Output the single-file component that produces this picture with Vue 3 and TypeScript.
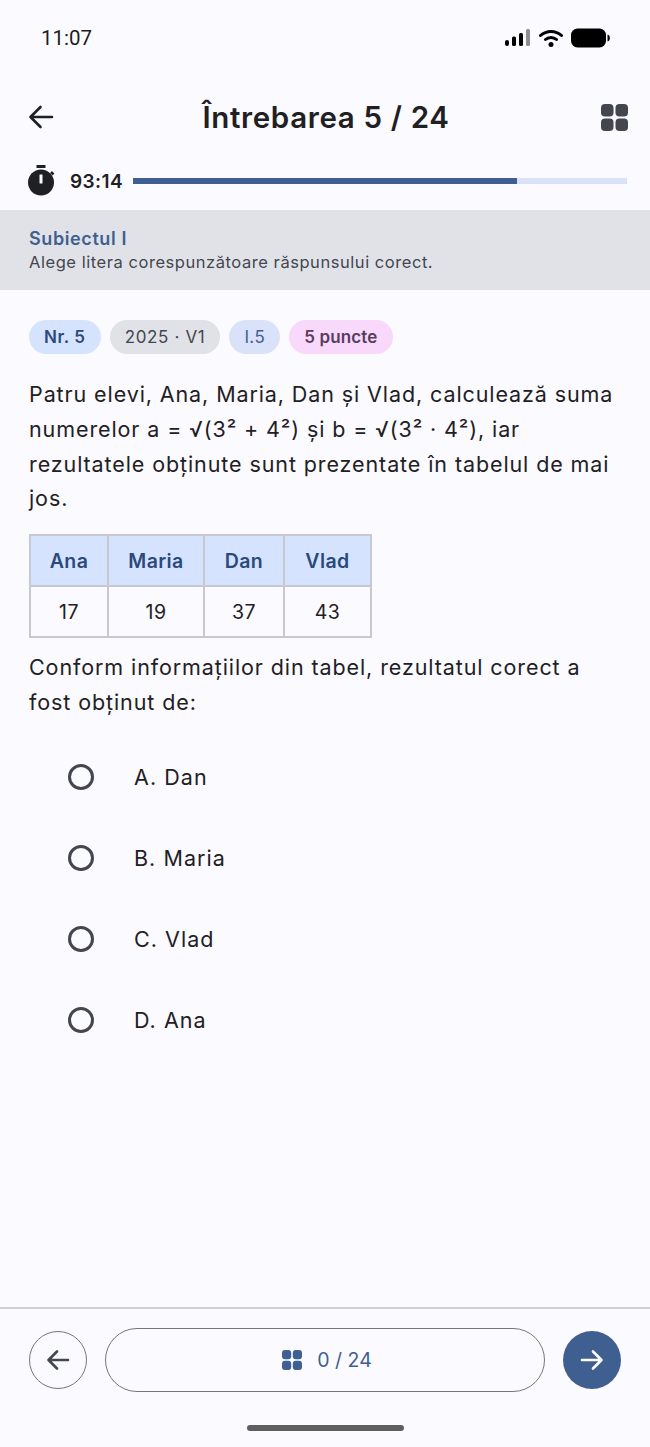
<script setup lang="ts">
const chips = [
  { t: 'Nr. 5', c: 'c1' },
  { t: '2025 · V1', c: 'c2' },
  { t: 'I.5', c: 'c3' },
  { t: '5 puncte', c: 'c4' },
]
const heads = ['Ana', 'Maria', 'Dan', 'Vlad']
const vals = ['17', '19', '37', '43']
const opts = ['A. Dan', 'B. Maria', 'C. Vlad', 'D. Ana']
</script>

<template>
  <div class="page">
    <div class="status">
      <span class="time">11:07</span>
      <div class="sicons">
        <svg width="26" height="18" viewBox="0 0 26 18">
          <rect x="0" y="11" width="4" height="6" rx="2" fill="#000" />
          <rect x="7" y="7.500" width="4" height="9.500" rx="1.500" fill="#000" />
          <rect x="14" y="4" width="4" height="13" rx="1.500" fill="#000" />
          <rect x="21" y="0" width="4" height="17" rx="1.500" fill="#8e8e8e" />
        </svg>
        <svg width="24" height="18" viewBox="0 0 24 18">
          <path d="M1.500 6.500C7.500 1 16.500 1 22.500 6.500" fill="none" stroke="#000" stroke-width="3" stroke-linecap="round" />
          <path d="M6.500 10.500C9.500 7.700 14.500 7.700 17.500 10.500" fill="none" stroke="#000" stroke-width="3" stroke-linecap="round" />
          <circle cx="12" cy="15.500" r="2.500" fill="#000" />
        </svg>
        <svg width="39" height="20" viewBox="0 0 39 20">
          <rect x="0" y="0.500" width="35" height="19" rx="6.500" fill="#000" />
          <path d="M36.500 6.500C38.300 7 38.800 8.300 38.800 10S38.300 13 36.500 13.500Z" fill="#000" />
        </svg>
      </div>
    </div>

    <header class="top">
      <svg class="back" width="28" height="28" viewBox="0 0 28 28">
        <path d="M25 14H4M13.500 4L3.500 14L13.500 24" fill="none" stroke="#1f2023" stroke-width="2.600" stroke-linecap="round" stroke-linejoin="round" />
      </svg>
      <h1>Întrebarea 5 / 24</h1>
      <svg class="grid" width="27" height="27" viewBox="0 0 27 27">
        <rect x="0" y="0" width="12.500" height="12.500" rx="4" fill="#44464f" />
        <rect x="14.500" y="0" width="12.500" height="12.500" rx="4" fill="#44464f" />
        <rect x="0" y="14.500" width="12.500" height="12.500" rx="4" fill="#44464f" />
        <rect x="14.500" y="14.500" width="12.500" height="12.500" rx="4" fill="#44464f" />
      </svg>
    </header>

    <div class="timer">
      <svg width="28" height="32" viewBox="0 0 28 32">
        <rect x="9.500" y="0" width="9" height="3" fill="#1f2023" />
        <circle cx="14" cy="17.500" r="13" fill="#1f2023" />
        <path d="M24 7l2.500 2.500" stroke="#1f2023" stroke-width="2.500" />
        <rect x="12.500" y="9.500" width="3" height="9" rx="0.500" fill="#fafaff" />
      </svg>
      <span class="clock">93:14</span>
      <div class="bar"><div class="fill"></div></div>
    </div>

    <section class="banner">
      <div class="bt">Subiectul I</div>
      <div class="bs">Alege litera corespunzătoare răspunsului corect.</div>
    </section>

    <div class="chips">
      <span v-for="c in chips" :key="c.t" class="chip" :class="c.c">{{ c.t }}</span>
    </div>

    <p class="q first">Patru elevi, Ana, Maria, Dan și Vlad, calculează suma numerelor a = √(3² + 4²) și b = √(3² · 4²), iar rezultatele obținute sunt prezentate în tabelul de mai jos.</p>

    <table>
      <thead>
        <tr><th v-for="h in heads" :key="h">{{ h }}</th></tr>
      </thead>
      <tbody>
        <tr><td v-for="v in vals" :key="v">{{ v }}</td></tr>
      </tbody>
    </table>

    <p class="q second">Conform informațiilor din tabel, rezultatul corect a fost obținut de:</p>

    <div class="opts">
      <div v-for="o in opts" :key="o" class="opt">
        <span class="radio"></span>
        <span class="lbl">{{ o }}</span>
      </div>
    </div>

    <footer class="foot">
      <div class="nav">
        <div class="cbtn">
          <svg width="26" height="26" viewBox="0 0 26 26">
            <path d="M23 13H4M12 4.500L3.500 13L12 21.500" fill="none" stroke="#44464f" stroke-width="2.600" stroke-linecap="round" stroke-linejoin="round" />
          </svg>
        </div>
        <div class="pill">
          <svg width="20" height="20" viewBox="0 0 20 20">
            <rect x="0" y="0" width="9.200" height="9.200" rx="3" fill="#3f5f90" />
            <rect x="10.800" y="0" width="9.200" height="9.200" rx="3" fill="#3f5f90" />
            <rect x="0" y="10.800" width="9.200" height="9.200" rx="3" fill="#3f5f90" />
            <rect x="10.800" y="10.800" width="9.200" height="9.200" rx="3" fill="#3f5f90" />
          </svg>
          <span>0 / 24</span>
        </div>
        <div class="cbtn solid">
          <svg width="26" height="26" viewBox="0 0 26 26">
            <path d="M3 13H22M14 4.500L22.500 13L14 21.500" fill="none" stroke="#fff" stroke-width="2.600" stroke-linecap="round" stroke-linejoin="round" />
          </svg>
        </div>
      </div>
      <div class="home"></div>
    </footer>
  </div>
</template>

<style>
html, body { margin: 0; background: #fafaff; }
</style>

<style scoped>
.page {
  width: 650px;
  height: 1447px;
  background: #fafaff;
  display: flex;
  flex-direction: column;
  font-family: Inter, "Noto Sans", sans-serif;
  color: #1f2023;
  overflow: hidden;
}
.status {
  height: 76px;
  box-sizing: border-box;
  padding: 26px 40px 0 41px;
  display: flex;
  justify-content: space-between;
  align-items: flex-start;
}
.time {
  font-family: Roboto, sans-serif;
  font-size: 20.500px;
  line-height: 24px;
  color: #1c1c1c;
}
.sicons {
  display: flex;
  align-items: center;
  gap: 8px;
  margin-top: 2px;
}
.top {
  height: 82px;
  display: flex;
  align-items: center;
  justify-content: space-between;
  padding: 0 22px 0 27px;
}
.top h1 {
  margin: 0 4px 0 0;
  font-size: 29.500px;
  line-height: 36px;
  font-weight: 600;
  letter-spacing: 0.650px;
}
.timer {
  height: 46px;
  margin-bottom: 6px;
  display: flex;
  align-items: center;
  padding: 0 23px 0 27px;
}
.clock {
  font-size: 19px;
  font-weight: 600;
  letter-spacing: 0.400px;
  margin-left: 15px;
  width: 63px;
}
.bar {
  flex: 1;
  height: 6px;
  background: #d9e2f8;
}
.fill {
  width: 77.800%;
  height: 100%;
  background: #3f5f90;
}
.banner {
  height: 80px;
  box-sizing: border-box;
  background: #e1e2e8;
  padding: 17px 29px 0;
}
.bt {
  font-size: 18px;
  line-height: 24px;
  font-weight: 600;
  letter-spacing: 0.600px;
  color: #3f5f90;
}
.bs {
  font-size: 16.500px;
  line-height: 22px;
  letter-spacing: 0.550px;
  color: #44464f;
}
.chips {
  display: flex;
  gap: 9px;
  padding: 30px 29px 0;
}
.chip {
  height: 34px;
  border-radius: 17px;
  padding: 0 15px;
  display: flex;
  align-items: center;
  font-size: 17px;
  letter-spacing: 0.400px;
}
.c1 { background: #d6e3ff; color: #2b4a7c; font-weight: 600; letter-spacing: 0.600px; }
.c2 { background: #e1e2e8; color: #44464f; letter-spacing: 0.650px; }
.c3 { background: #d9e2f8; color: #3f5f90; }
.c4 { background: #f8d8fb; color: #573e5c; font-weight: 600; letter-spacing: 0.150px; }
.q {
  margin: 0;
  padding: 0 29px;
  font-size: 21.500px;
  line-height: 34.800px;
  letter-spacing: 0.900px;
}
.first { margin-top: 23px; }
table {
  margin: 18px 0 0 29px;
  border-collapse: collapse;
  width: 343px;
  table-layout: fixed;
}
th, td {
  border: 2px solid #c8c9d0;
  height: 49px;
  padding: 0;
  text-align: center;
  font-size: 19.500px;
  font-weight: 400;
  letter-spacing: 0.400px;
}
th {
  background: #d6e3ff;
  color: #2b4a7c;
  font-weight: 600;
}
th:nth-child(1) { width: 76px; }
th:nth-child(2) { width: 94px; }
th:nth-child(3) { width: 78px; }
.second { margin-top: 12px; }
.opts {
  margin-top: 17px;
  display: flex;
  flex-direction: column;
}
.opt {
  height: 81px;
  display: flex;
  align-items: center;
  padding-left: 68px;
}
.radio {
  width: 26px;
  height: 26px;
  box-sizing: border-box;
  border: 3px solid #44464f;
  border-radius: 50%;
}
.lbl {
  margin-left: 40px;
  font-size: 21.500px;
  letter-spacing: 1.050px;
}
.foot {
  margin-top: auto;
  border-top: 2px solid #d0d0d6;
  height: 140px;
  box-sizing: border-box;
  display: flex;
  flex-direction: column;
  position: relative;
}
.nav {
  display: flex;
  align-items: center;
  padding: 19px 29px 0;
  gap: 18px;
}
.cbtn {
  width: 58px;
  height: 58px;
  box-sizing: border-box;
  border: 1.500px solid #74767f;
  border-radius: 50%;
  display: flex;
  align-items: center;
  justify-content: center;
  flex: none;
}
.solid {
  background: #3f5f90;
  border: none;
}
.pill {
  flex: 1;
  height: 64px;
  box-sizing: border-box;
  border: 1.500px solid #74767f;
  border-radius: 32px;
  padding-left: 4px;
  display: flex;
  align-items: center;
  justify-content: center;
  gap: 15px;
  color: #3f5f90;
  font-size: 19.500px;
}
.home {
  width: 157px;
  height: 6px;
  border-radius: 3px;
  background: #5f5f5f;
  margin: 33px auto 0;
}
</style>
